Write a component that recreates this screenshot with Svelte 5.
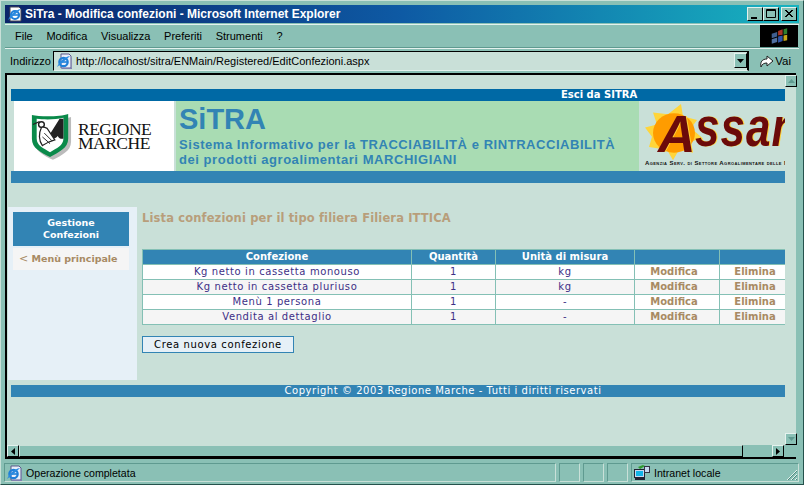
<script>
  const menus = ['File', 'Modifica', 'Visualizza', 'Preferiti', 'Strumenti', '?'];
  const rows = [
    ['Kg netto in cassetta monouso', '1', 'kg'],
    ['Kg netto in cassetta pluriuso', '1', 'kg'],
    ['Menù 1 persona', '1', '-'],
    ['Vendita al dettaglio', '1', '-']
  ];
</script>

{#snippet ie(size)}
  <svg width={size} height={size} viewBox="0 0 16 16" class="ico">
    <path d="M5 1h8l2 2v12H5z" fill="#e8eefa" stroke="#5a5a8c"/>
    <path d="M6 15.500h10v-11" fill="none" stroke="#8080b0"/>
    <circle cx="7.500" cy="9" r="4.200" fill="none" stroke="#1f7fd8" stroke-width="2.200"/>
    <path d="M3.500 9h8" stroke="#1f7fd8" stroke-width="1.600"/>
    <path d="M1 14c2-5 7-10 13-11-3 3-9 8-13 11z" fill="#2a8ae0"/>
  </svg>
{/snippet}

<div class="window">
  <div class="titlebar">
    <svg width="16" height="16" viewBox="0 0 16 16" class="ico">
      <path d="M3 1h9l2 2v12H3z" fill="#fff" stroke="#445"/>
      <circle cx="8" cy="9" r="4" fill="none" stroke="#1f7fd8" stroke-width="2.200"/>
      <path d="M4 9h8" stroke="#1f7fd8" stroke-width="1.600"/>
      <path d="M1 14c2-5 7-10 13-11-3 3-9 8-13 11z" fill="#2a8ae0"/>
    </svg>
    <span class="title">SiTra - Modifica confezioni - Microsoft Internet Explorer</span>
    <div class="winbtns">
      <span class="wbtn"><svg width="14" height="12" viewBox="0 0 14 12"><path d="M3 9h6v2H3z" fill="#000"/></svg></span>
      <span class="wbtn"><svg width="14" height="12" viewBox="0 0 14 12"><path d="M2.500 1.500h9v8h-9zM2.500 2.500h9" fill="none" stroke="#000"/></svg></span>
      <span class="wbtn close"><svg width="14" height="12" viewBox="0 0 14 12"><path d="M3 2l7 7M4 2l7 7M10 2l-7 7M11 2l-7 7" stroke="#000"/></svg></span>
    </div>
  </div>

  <div class="menubar">
    <nav class="menus">
      {#each menus as m}<span>{m}</span>{/each}
    </nav>
    <div class="flag">
      <svg width="20" height="17" viewBox="0 0 22 18">
        <path d="M3 6l6-2v5l-6 2z" fill="#3f5f90"/>
        <path d="M3 12l6-2v5l-6 2z" fill="#4f6fa0"/>
        <path d="M10 3l5-2v6l-5 1z" fill="#a83526"/>
        <path d="M16 1l4-1v6l-4 1z" fill="#2f7f2f"/>
        <path d="M10 9l5-1v6l-5 2z" fill="#2f54a8"/>
        <path d="M16 8l4-1v6l-4 1z" fill="#c8a818"/>
      </svg>
    </div>
  </div>

  <div class="addrbar">
    <span class="addrlabel">Indirizzo</span>
    <div class="addrfield">
      {@render ie(16)}
      <span class="url">http://localhost/sitra/ENMain/Registered/EditConfezioni.aspx</span>
      <span class="combo"><svg width="7" height="4" viewBox="0 0 7 4"><path d="M0 0h7L3.500 4z" fill="#000"/></svg></span>
    </div>
    <div class="go">
      <svg width="15" height="15" viewBox="0 0 15 15"><path d="M2 14c-1-5 1-8 6-8V3l6 5-6 5v-3c-3 0-5 1-6 4z" fill="#fff" stroke="#222"/></svg>
      <span>Vai</span>
    </div>
  </div>

  <div class="viewport">
    <div class="vrow">
      <div class="page">
        <div class="topbar"><span>Esci da SITRA</span></div>
        <header class="banner">
          <div class="logo">
            <svg width="42" height="50" viewBox="0 0 44 50">
              <path d="M3 4c8 2 30 2 38-1v26c0 10-10 14-19 19C12 43 3 39 3 29z" fill="#bbb" transform="translate(2 2)"/>
              <path d="M2 3c8 2 30 2 38-1v26c0 10-10 14-19 19C11 42 2 38 2 28z" fill="#0a8a4a"/>
              <path d="M7 7c8 1 20 1 28-1v22c0 7-7 10-14 14C14 38 7 35 7 28z" fill="#fff"/>
              <path d="M19 26L31 7h4v21c-3 0-4 0-6-3-2 3-5 3-10 1z" fill="#222"/>
              <circle cx="12" cy="13" r="3" fill="none" stroke="#222" stroke-width="1.500"/>
              <path d="M3 13l7-3M12 16c-3 6-3 14 1 19 3-2 9-5 13-6l-8-12c-2-1-4-2-6-1z" fill="#fff" stroke="#222" stroke-width="1.300"/>
              <path d="M15 22l8 8M13 26l8 7" stroke="#222"/>
            </svg>
            <div class="logotext"><span>REGIONE</span><span>MARCHE</span></div>
          </div>
          <div class="claim">
            <h1>SiTRA</h1>
            <p>Sistema Informativo per la TRACCIABILITÀ e RINTRACCIABILITÀ</p>
            <p>dei prodotti agroalimentari MARCHIGIANI</p>
          </div>
          <div class="assam">
            <svg class="sun" width="58" height="58" viewBox="0 0 58 62" preserveAspectRatio="none">
              <path d="M23 11L36 0l2 13 14 4-6 9 12 11-13 3 3 12-14-3-6 11-6-11L4 46l3-11L0 25l12-3L8 9z" fill="#ffd53a"/>
              <circle cx="29" cy="31" r="21" fill="#ff9c00"/>
            </svg>
            <span class="bigA">A</span><span class="rest">ssam</span>
            <span class="tiny">Agenzia Serv. di Settore Agroalimentare delle Marche</span>
          </div>
        </header>
        <div class="subbar"></div>

        <div class="main">
          <aside class="side">
            <div class="sidehead">Gestione Confezioni</div>
            <div class="sideitem"><span class="lt">&lt;</span> Menù principale</div>
          </aside>
          <section class="body">
            <h2>Lista confezioni per il tipo filiera Filiera ITTICA</h2>
            <table>
              <colgroup><col class="c1" /><col class="c2" /><col class="c3" /><col class="c4" /><col class="c5" /></colgroup>
              <thead><tr><th>Confezione</th><th>Quantità</th><th>Unità di misura</th><th></th><th></th></tr></thead>
              <tbody>
                {#each rows as r}
                  <tr>
                    <td>{r[0]}</td><td>{r[1]}</td><td>{r[2]}</td>
                    <td class="act mod">Modifica</td><td class="act">Elimina</td>
                  </tr>
                {/each}
              </tbody>
            </table>
            <button>Crea nuova confezione</button>
          </section>
        </div>
        <footer class="foot">Copyright © 2003 Regione Marche - Tutti i diritti riservati</footer>
      </div>
      <div class="vscroll">
        <span class="sbtn"><svg width="7" height="4" viewBox="0 0 7 4"><path d="M0 4h7L3.500 0z" fill="#5f9a90"/></svg></span>
        <span class="sbtn"><svg width="7" height="4" viewBox="0 0 7 4"><path d="M0 0h7L3.500 4z" fill="#5f9a90"/></svg></span>
      </div>
    </div>
    <div class="hscroll">
      <span class="hbtn"><svg width="4" height="7" viewBox="0 0 4 7"><path d="M4 0v7L0 3.500z" fill="#000"/></svg></span>
      <span class="thumb"></span>
      <span class="hbtn right"><svg width="4" height="7" viewBox="0 0 4 7"><path d="M0 0v7l4-3.500z" fill="#000"/></svg></span>
    </div>
  </div>

  <div class="status">
    <div class="cell grow">{@render ie(16)}<span>Operazione completata</span></div>
    <div class="cell small"></div>
    <div class="cell small"></div>
    <div class="cell small"></div>
    <div class="cell zone">
      <svg width="17" height="17" viewBox="0 0 17 17" class="ico">
        <path d="M5 3l5-2 2 1-5 3z" fill="#2f9a2f"/>
        <rect x="1.500" y="5.500" width="10" height="8" fill="#c8d8f0" stroke="#223"/>
        <rect x="3" y="7" width="7" height="5" fill="#12b4e8"/>
        <rect x="11.500" y="2.500" width="5" height="6" fill="#c8d8f0" stroke="#334"/>
        <path d="M2 15h10" stroke="#223" stroke-width="2"/>
      </svg>
      <span>Intranet locale</span>
      <svg class="grip" width="12" height="12" viewBox="0 0 12 12"><path d="M11 1L1 11M11 5l-6 6M11 9l-2 2" stroke="#e4f2ee" fill="none"/><path d="M11 2L2 11M11 6l-5 5M11 10l-1 1" stroke="#4f8a80" fill="none"/></svg>
    </div>
  </div>
</div>

<style>
  :global(body) { margin: 0; background: #8ac0b5; }
  .window {
    box-sizing: border-box; width: 804px; height: 485px; overflow: hidden;
    background: #8ac0b5; padding: 4px 4px 0 4px;
    border-top: 1px solid #c9e0d8; border-left: 1px solid #c9e0d8;
    border-right: 1px solid #25524c; border-bottom: 1px solid #25524c;
    display: flex; flex-direction: column;
    font: 11px "Liberation Sans", Arial, sans-serif; color: #000;
  }
  .ico { flex: none; display: block; }

  .titlebar {
    height: 18px; flex: none; display: flex; align-items: center; gap: 2px; padding: 0 2px;
    background: linear-gradient(90deg, #0a246a 0%, #0e5aa4 50%, #18b4c0 100%);
  }
  .title { font: bold 12px "Liberation Sans", sans-serif; color: #fff; white-space: nowrap; }
  .winbtns { margin-left: auto; display: flex; }
  .wbtn {
    box-sizing: border-box; width: 16px; height: 14px; background: #8ac0b5; display: flex; align-items: center; justify-content: center;
    border: 1px solid; border-color: #e4f2ee #000 #000 #e4f2ee;
  }
  .close { margin-left: 2px; }

  .menubar {
    height: 24px; flex: none; margin-top: 1px; display: flex; align-items: stretch;
    border-top: 1px solid #e4f2ee; border-bottom: 1px solid #5f9a90; box-sizing: border-box;
  }
  .menus { display: flex; align-items: center; padding-left: 10px; gap: 13.700px; font-size: 11px; }
  .flag { margin-left: auto; width: 38px; margin-right: 1px; background: #000; display: flex; align-items: center; justify-content: center; }

  .addrbar { height: 24px; flex: none; display: flex; align-items: center; border-top: 1px solid #e4f2ee; box-sizing: border-box; }
  .addrlabel { width: 48px; flex: none; padding-left: 5px; box-sizing: border-box; font-size: 11px; }
  .addrfield {
    flex: 1; height: 20px; box-sizing: border-box; display: flex; align-items: center; gap: 4px; padding-left: 2px;
    background: #c9e0d8; border: 1px solid; border-color: #000 #000 #e4f2ee #000; border-width: 1px 2px 1px 1px;
  }
  .url { font-size: 11px; white-space: nowrap; }
  .combo {
    margin-left: auto; width: 13px; height: 15px; box-sizing: border-box; background: #8ac0b5; display: flex; align-items: center; justify-content: center;
    border: 1px solid; border-color: #e4f2ee #000 #000 #e4f2ee;
  }
  .go { width: 50px; flex: none; display: flex; align-items: center; justify-content: flex-end; padding-right: 8px; gap: 1px; box-sizing: border-box; font-size: 11.500px; }

  .viewport {
    flex: none; height: 386px; margin-top: 1px; box-sizing: border-box; display: flex; flex-direction: column;
    border: solid #000; border-width: 2px 0 2px 2px; background: #c9e0d8; margin-right: 3px;
  }
  .vrow { flex: 1; display: flex; min-height: 0; }
  .page { width: 778px; flex: none; overflow: hidden; font-family: "DejaVu Sans", Verdana, sans-serif; font-size: 10px; padding-top: 14px; box-sizing: border-box; }
  .topbar {
    height: 12px; margin-left: 4px; background: #0069a5; color: #fff; font-weight: bold; font-size: 10px; line-height: 12px;
    padding-left: 550px;
  }
  .banner { margin-left: 4px; height: 70px; display: flex; }
  .logo { margin-left: 3px; width: 160px; background: #fff; display: flex; align-items: center; gap: 6px; padding-left: 16px; box-sizing: border-box; }
  .logotext { display: flex; flex-direction: column; font: 17.500px/14px "Liberation Serif", serif; color: #111; letter-spacing: -.5px; }
  .claim { margin-left: 2px; width: 463px; background: #a9dcb3; padding: 2px 0 0 3px; box-sizing: border-box; color: #3284b4; font-family: "Liberation Sans", sans-serif; font-weight: bold; }
  h1 { margin: 0 0 1px; font-size: 29px; line-height: 33px; font-weight: bold; }
  .claim p { margin: 0; font-size: 13px; line-height: 15px; letter-spacing: .55px; white-space: nowrap; }
  .assam { flex: 1; min-width: 0; position: relative; overflow: hidden; }
  .sun { position: absolute; left: 6px; top: 3px; }
  .bigA, .rest {
    position: absolute; font-family: "Liberation Sans", sans-serif; font-weight: bold; font-style: italic; color: #6b0a0a;
    text-shadow: 1px 0 0 #ffd53a;
  }
  .bigA { left: 19px; top: 5px; font-size: 52px; line-height: 56px; }
  .rest { left: 56px; top: 7px; font-size: 44px; line-height: 52px; letter-spacing: 1px; transform: scaleY(1.25); transform-origin: 0 100%; }
  .tiny { position: absolute; left: 6px; top: 58px; font: bold 6px/8px "Liberation Sans", sans-serif; color: #111; white-space: nowrap; font-variant: small-caps; letter-spacing: .42px; }
  .subbar { height: 12px; margin-left: 4px; background: #3284b4; }

  .main { margin-top: 24px; height: 173px; display: flex; }
  .side { width: 129px; margin-left: 1px; background: #e6f0f7; padding: 5px 8px 0 5px; box-sizing: border-box; flex: none; }
  .sidehead { background: #3284b4; color: #fff; font-weight: bold; font-size: 9.500px; line-height: 12px; height: 34px; padding: 5px 12px; box-sizing: border-box; text-align: center; }
  .sideitem { margin-top: 2px; height: 22px; background: #f5f5f5; color: #a88a63; font-weight: bold; font-size: 9.500px; line-height: 22px; padding-left: 6px; white-space: nowrap; }
  .lt { font-weight: normal; font-size: 11px; }
  .body { margin-left: 5px; width: 643px; flex: none; overflow: hidden; }
  h2 { margin: 4px 0 0; font-size: 11.500px; line-height: 14px; font-weight: bold; color: #b89e7b; white-space: nowrap; letter-spacing: .14px; }
  table { margin-top: 24px; border-collapse: collapse; table-layout: fixed; width: 648px; }
  .c1 { width: 269px; } .c2 { width: 84px; } .c3 { width: 139px; } .c4 { width: 85px; } .c5 { width: 71px; }
  th, td { border: 1px solid #84c0b5; height: 14px; padding: 0; text-align: center; font-size: 10px; line-height: 14px; white-space: nowrap; overflow: hidden; }
  th { background: #3284b4; color: #fff; font-weight: bold; }
  td { color: #3d2f86; background: #fff; letter-spacing: .6px; }
  tbody tr:nth-child(even) td { background: #f5f5f5; }
  td.act { color: #a88a63; font-weight: bold; letter-spacing: 0; }
  td.mod { padding-right: 6px; }
  button {
    display: block; margin-top: 11px; width: 152px; height: 17px; padding: 0; box-sizing: border-box;
    background: #e6f0f7; border: 1px solid #3284b4; color: #000; font: 10px "DejaVu Sans", sans-serif; letter-spacing: .63px;
  }
  .foot { margin: 5px 0 0 4px; height: 12px; background: #3284b4; color: #fff; font-size: 10px; line-height: 12px; text-align: center; letter-spacing: .53px; padding-left: 90px; box-sizing: border-box; white-space: nowrap; }

  .vscroll { width: 12px; flex: none; display: flex; flex-direction: column; justify-content: space-between; }
  .sbtn { width: 12px; height: 12px; box-sizing: border-box; background: #8ac0b5; display: flex; align-items: center; justify-content: center; border: 1px solid; border-color: #e4f2ee #000 #000 #e4f2ee; }
  .hscroll { height: 12px; flex: none; display: flex; background: #8ac0b5; }
  .hbtn { width: 12px; height: 12px; flex: none; box-sizing: border-box; display: flex; align-items: center; justify-content: center; background: #8ac0b5; border: 1px solid; border-color: #e4f2ee #000 #000 #e4f2ee; }
  .thumb { width: 724px; flex: none; box-sizing: border-box; background: #8ac0b5; border: 1px solid; border-color: #c9e0d8 #000 #000 #c9e0d8; }
  .hbtn.right { margin-left: 29px; }

  .status { margin-top: 4px; height: 19px; flex: none; display: flex; gap: 3px; font-size: 10.600px; margin-left: -1px; }
  .cell { box-sizing: border-box; height: 19px; display: flex; align-items: center; border: 1px solid; border-color: #5f9a90 #c9e0d8 #c9e0d8 #5f9a90; }
  .grow { width: 552px; gap: 4px; padding-left: 1px; }
  .small { width: 21px; }
  .zone { flex: 1; position: relative; gap: 4px; padding-left: 1px; }
  .grip { position: absolute; right: 0; bottom: 0; }
</style>
